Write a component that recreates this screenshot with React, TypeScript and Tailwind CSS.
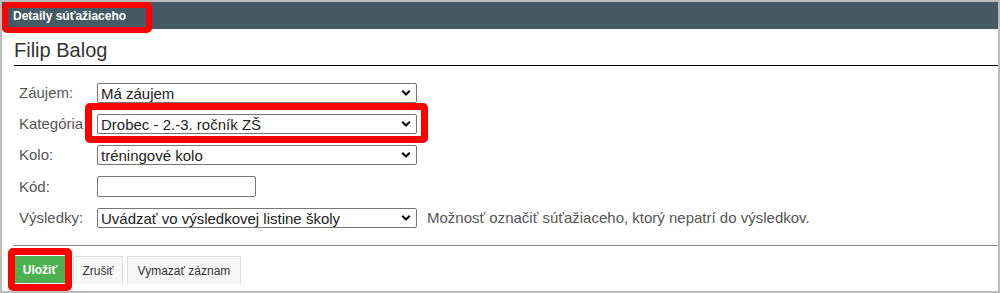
import React from 'react';

const rows = [
    { label: 'Záujem:', value: 'Má záujem' },
    { label: 'Kategória', value: 'Drobec - 2.-3. ročník ZŠ' },
    { label: 'Kolo:', value: 'tréningové kolo' },
];

function Chevron() {
    return (
        <svg className="pointer-events-none absolute right-[5px] top-1/2 -translate-y-1/2" width="10" height="7" viewBox="0 0 10 7">
            <path d="M1.2 1.2 L5 5 L8.8 1.2" fill="none" stroke="#111" strokeWidth="2.2" />
        </svg>
    );
}

function FakeSelect({ value }: { value: string }) {
    return (
        <div className="relative w-[320px] h-[20px] border border-[#767676] rounded-[2px] bg-white flex items-center pl-[3px] text-[15px] text-[#222] leading-none">
            <span>{value}</span>
            <Chevron />
        </div>
    );
}

export default function App() {
    return (
        <div className="relative w-[1000px] h-[293px] border-2 border-[#bdbdbd] bg-white font-['Liberation_Sans',Arial,sans-serif] overflow-hidden">
            {/* Header */}
            <div className="h-[27px] bg-[#455a64] flex items-center pl-[11px] text-white text-[12px] font-bold">
                Detaily súťažiaceho
            </div>

            <div className="pl-[12px]">
                <h1 className="pt-[8px] h-[37px] text-[20px] leading-[26px] text-[#333] border-b border-black">
                    Filip Balog
                </h1>

                <div className="pl-[5px] pt-[17px] flex flex-col gap-[11px] text-[15px] leading-[20px] text-[#555]">
                    {rows.map((r) => (
                        <div key={r.label} className="flex items-center h-[20px]">
                            <span className="w-[78px]">{r.label}</span>
                            <FakeSelect value={r.value} />
                        </div>
                    ))}
                    <div className="flex items-center h-[21px]">
                        <span className="w-[78px]">Kód:</span>
                        <div className="w-[159px] h-[21px] border border-[#767676] rounded-[2px] bg-white" />
                    </div>
                    <div className="flex items-center h-[20px]">
                        <span className="w-[78px]">Výsledky:</span>
                        <FakeSelect value="Uvádzať vo výsledkovej listine školy" />
                        <span className="ml-[10px]">Možnosť označiť súťažiaceho, ktorý nepatrí do výsledkov.</span>
                    </div>
                </div>

                <div className="mt-[17px] border-t border-[#888]" />

                <div className="pt-[10px] flex items-start text-[12px]">
                    <button className="ml-[1px] w-[50px] h-[27px] bg-[#4caf50] text-white font-bold">Uložiť</button>
                    <button className="ml-[8px] w-[50px] h-[28px] bg-[#f7f7f7] border border-[#dddddd] border-b-0 text-[#333]">Zrušiť</button>
                    <button className="ml-[4px] w-[114px] h-[28px] bg-[#f7f7f7] border border-[#dddddd] border-b-0 text-[#333]">Vymazať záznam</button>
                </div>
            </div>

            {/* Annotation highlights */}
            <div className="absolute left-0 top-0 w-[150px] h-[31px] border-[6px] border-[#ff0000] rounded-[5px]" />
            <div className="absolute left-[83px] top-[101px] w-[343px] h-[40px] border-[7px] border-[#ff0000] rounded-[5px]" />
            <div className="absolute left-[6px] top-[246px] w-[64px] h-[43px] border-[7px] border-[#ff0000] rounded-[5px]" />
        </div>
    );
}
